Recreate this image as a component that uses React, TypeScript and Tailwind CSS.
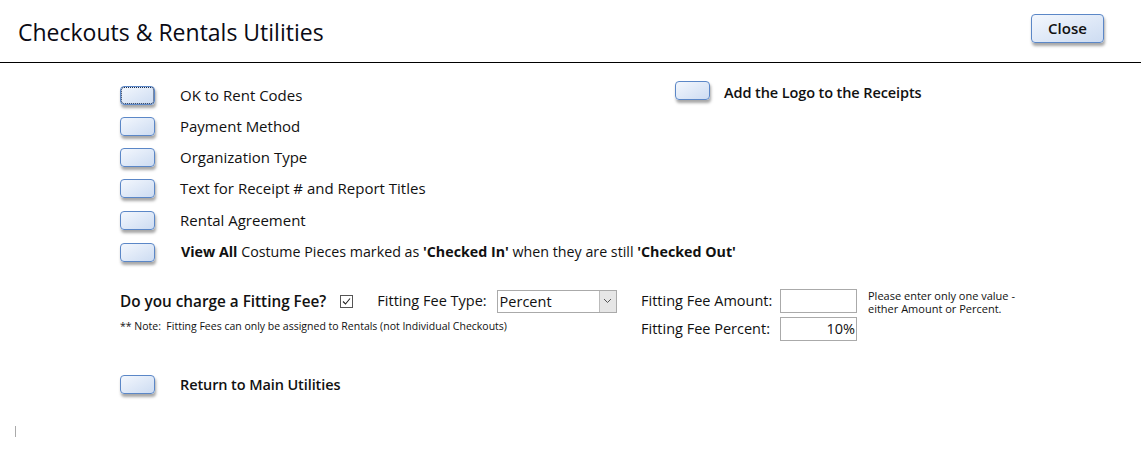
import React from "react";

function Btn({ focused = false }: { focused?: boolean }) {
  return (
    <div className="relative w-[35px] h-[19px] shrink-0">
      <div className="absolute inset-0 rounded-[4px] border border-[#5b87c7] bg-gradient-to-br from-[#f3f7fd] to-[#cddcf2] shadow-[1px_3px_3px_rgba(0,0,0,0.35)]" />
      {focused && (
        <div className="absolute inset-[1px] rounded-[3px] border border-dotted border-[#1a2d50]" />
      )}
    </div>
  );
}

export default function App() {
  const font = { fontFamily: '"Open Sans", "Noto Sans", sans-serif' };
  return (
    <div className="w-[1141px] h-[474px] bg-white text-black relative overflow-hidden" style={font}>
      {/* Header */}
      <div className="h-[63px] flex items-start justify-between border-b border-black">
        <div className="pl-[18px] pt-[18px] text-[23px] leading-[28px] text-[#0a0a14]">
          Checkouts &amp; Rentals Utilities
        </div>
        <div className="pt-[14px] pr-[37px]">
          <button className="w-[73px] h-[29px] rounded-[4px] border border-[#5b87c7] bg-gradient-to-br from-[#f3f7fd] to-[#cddcf2] shadow-[1px_3px_3px_rgba(0,0,0,0.35)] text-[15px] font-semibold leading-none text-[#111]">
            Close
          </button>
        </div>
      </div>

      {/* Body */}
      <div className="flex pl-[120px] pt-[17px]">
        <div className="flex flex-col w-[555px]">
          {[
            { t: "OK to Rent Codes", h: 31, focused: true },
            { t: "Payment Method", h: 30 },
            { t: "Organization Type", h: 32 },
            { t: "Text for Receipt # and Report Titles", h: 31 },
            { t: "Rental Agreement", h: 32 },
          ].map((r, i) => (
            <div key={i} className="flex items-center" style={{ height: r.h }}>
              <Btn focused={r.focused} />
              <span className="ml-[25px] text-[15px] text-[#111]">{r.t}</span>
            </div>
          ))}
          <div className="flex items-center h-[32px]">
            <Btn />
            <span className="ml-[26px] text-[14.25px] text-[#111] whitespace-nowrap">
              <b>View All</b> Costume Pieces marked as <b>'Checked In'</b> when they are still{" "}
              <b>'Checked Out'</b>
            </span>
          </div>
        </div>
        <div className="flex items-start pt-[1px]">
          <Btn />
          <span className="ml-[14px] mt-[1px] text-[14.5px] tracking-[-0.1px] font-semibold text-[#111]">
            Add the Logo to the Receipts
          </span>
        </div>
      </div>

      {/* Fitting fee */}
      <div className="flex pl-[120px] pt-[21px]">
        <div className="flex flex-col w-[521px]">
          <div className="flex items-center h-[24px]">
            <span className="text-[15.3px] font-semibold text-[#111]">Do you charge a Fitting Fee?</span>
            <span className="ml-[14px] w-[13px] h-[13px] border border-[#555] flex items-center justify-center">
              <svg width="11" height="11" viewBox="0 0 11 11">
                <path d="M2 5.5 L4.5 8 L9 2.5" fill="none" stroke="#222" strokeWidth="1.1" />
              </svg>
            </span>
            <span className="ml-[24px] text-[14.5px] text-[#111]">Fitting Fee Type:</span>
            <div className="ml-[10px] w-[120px] h-[23px] border border-[#aaa] flex items-stretch">
              <span className="flex-1 pl-[2px] text-[14.5px] leading-[21px] text-[#111]">Percent</span>
              <span className="w-[17px] bg-[#e6e6e6] border-l border-[#bbb] flex items-center justify-center">
                <svg width="9" height="6" viewBox="0 0 9 6">
                  <path d="M1 1 L4.5 4.5 L8 1" fill="none" stroke="#555" strokeWidth="1" />
                </svg>
              </span>
            </div>
          </div>
          <div className="mt-[6px] text-[10.5px] text-[#111]">
            ** Note:&nbsp; Fitting Fees can only be assigned to Rentals (not Individual Checkouts)
          </div>
        </div>
        <div className="flex flex-col gap-[4px]">
          <div className="flex items-center h-[24px]">
            <span className="w-[139px] text-[14.5px] text-[#111]">Fitting Fee Amount:</span>
            <div className="w-[77px] h-[24px] border border-[#aaa]" />
          </div>
          <div className="flex items-center h-[24px]">
            <span className="w-[139px] text-[14.5px] text-[#111]">Fitting Fee Percent:</span>
            <div className="w-[77px] h-[24px] border border-[#aaa] text-right pr-[1px] text-[14.5px] leading-[22px] text-[#111]">
              10%
            </div>
          </div>
        </div>
        <div className="ml-[11px] mt-[0px] text-[11px] leading-[13px] text-[#111]">
          Please enter only one value -<br />
          either Amount or Percent.
        </div>
      </div>

      {/* Return */}
      <div className="flex items-center pl-[120px] pt-[33px]">
        <Btn />
        <span className="ml-[25px] text-[14.5px] font-semibold text-[#111] tracking-[-0.1px]">Return to Main Utilities</span>
      </div>

      <div className="absolute left-[15px] top-[426px] w-[1px] h-[11px] bg-[#aaa]" />
    </div>
  );
}
